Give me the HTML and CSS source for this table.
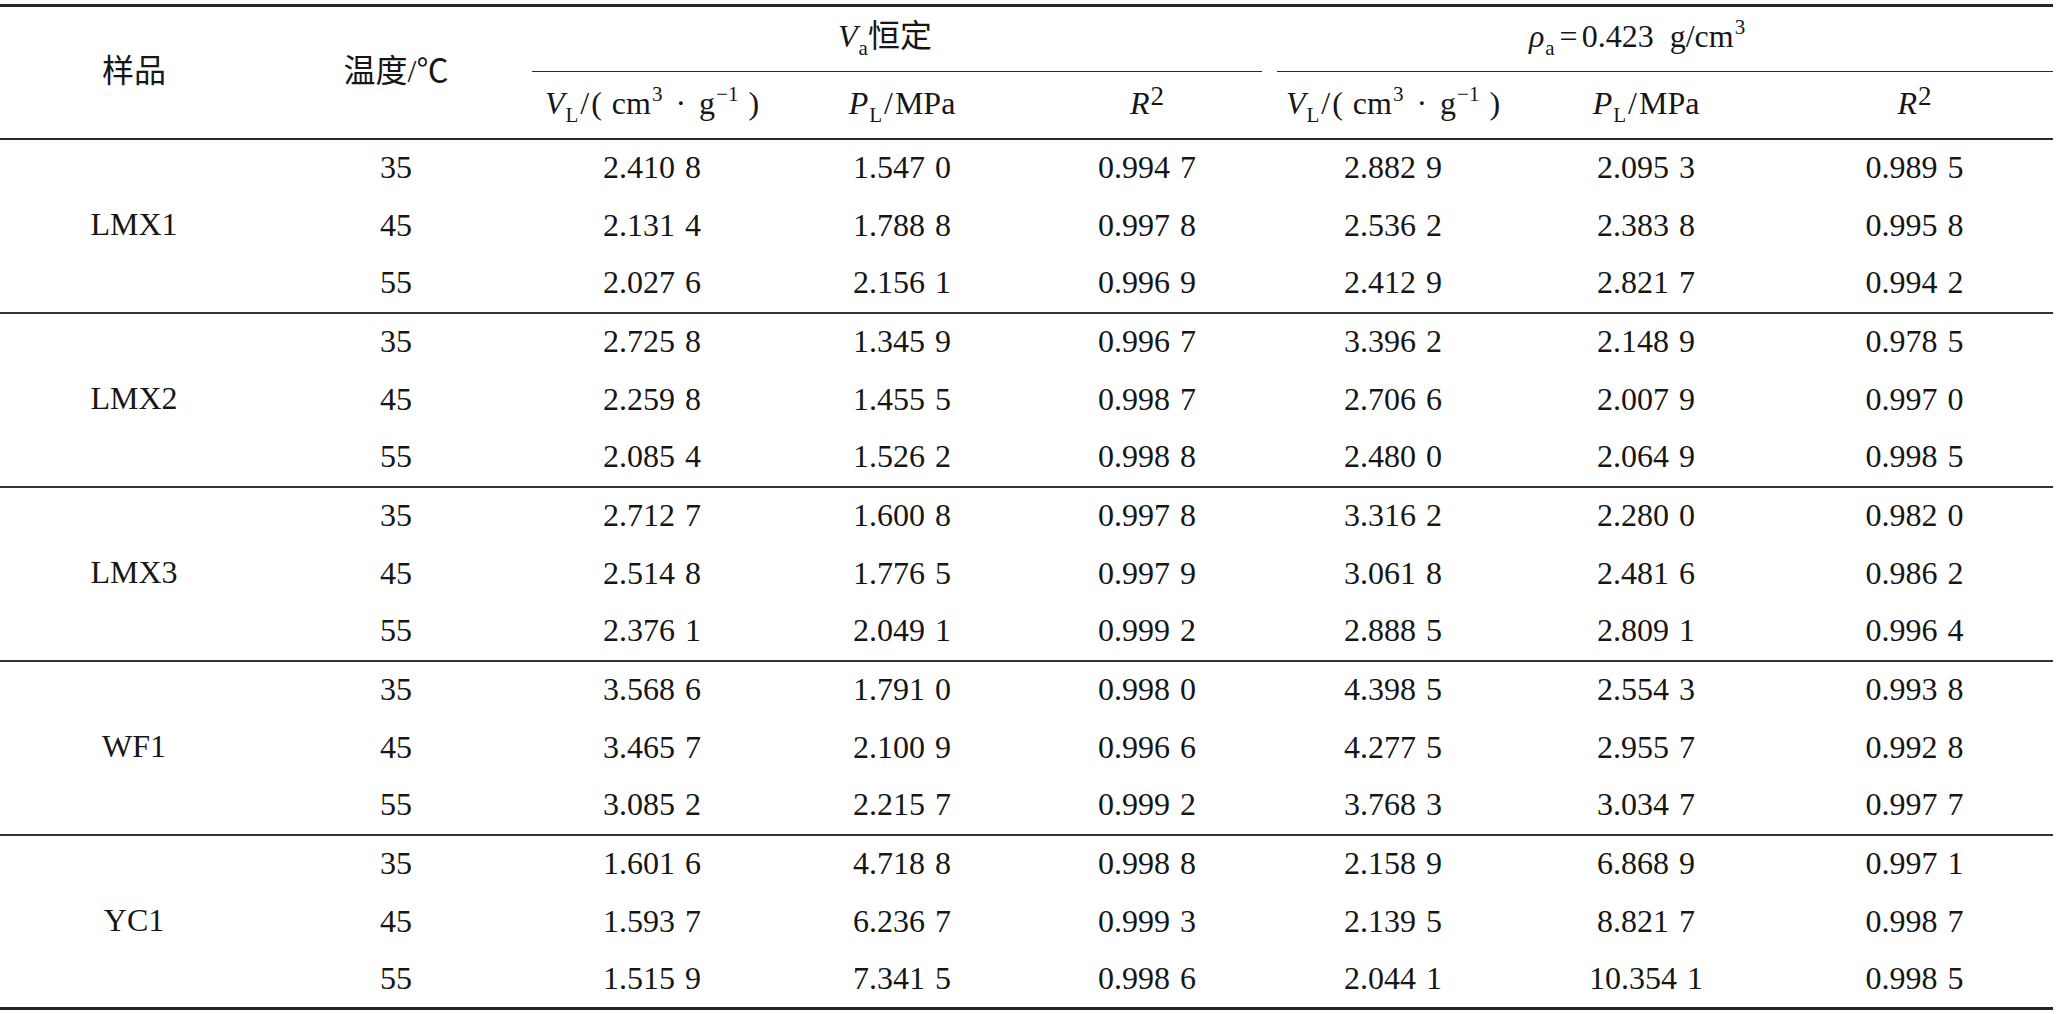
FILE: index.html
```html
<!DOCTYPE html>
<html lang="zh">
<head>
<meta charset="utf-8">
<title>表</title>
<link rel="stylesheet" href="styles.css">
</head>
<body>
<table class="tbl">
  <colgroup>
    <col class="c1"><col class="c2"><col class="c3"><col class="c4"><col class="c5"><col class="c6"><col class="c7"><col class="c8">
  </colgroup>
  <thead>
    <tr class="h1">
      <th rowspan="2" class="hb">样品</th>
      <th rowspan="2" class="hb">温度/℃</th>
      <th colspan="3" class="grp g1"><div class="gl"><span class="lat"><i>V</i><sub>a</sub></span>恒定</div></th>
      <th colspan="3" class="grp g2"><div class="gl"><span class="lat"><i>ρ</i><sub>a</sub><span class="eq">=</span>0.423&nbsp; g/cm<sup>3</sup></span></div></th>
    </tr>
    <tr class="h2">
      <th class="hb"><span class="lat"><i>V</i><sub>L</sub><span class="sl">/</span><span class="pl">(</span>cm<sup>3</sup><span class="dot">·</span>g<sup>−1</sup><span class="prr">)</span></span></th>
      <th class="hb"><span class="lat"><i>P</i><sub>L</sub><span class="sl">/</span>MPa</span></th>
      <th class="hb"><span class="lat"><i>R</i><sup class="r2">2</sup></span></th>
      <th class="hb"><span class="lat"><i>V</i><sub>L</sub><span class="sl">/</span><span class="pl">(</span>cm<sup>3</sup><span class="dot">·</span>g<sup>−1</sup><span class="prr">)</span></span></th>
      <th class="hb"><span class="lat"><i>P</i><sub>L</sub><span class="sl">/</span>MPa</span></th>
      <th class="hb"><span class="lat"><i>R</i><sup class="r2">2</sup></span></th>
    </tr>
  </thead>
  <tbody>
    <tr><td rowspan="3" class="end">LMX1</td><td>35</td><td>2.410 8</td><td>1.547 0</td><td>0.994 7</td><td>2.882 9</td><td>2.095 3</td><td>0.989 5</td></tr>
    <tr><td>45</td><td>2.131 4</td><td>1.788 8</td><td>0.997 8</td><td>2.536 2</td><td>2.383 8</td><td>0.995 8</td></tr>
    <tr class="last"><td>55</td><td>2.027 6</td><td>2.156 1</td><td>0.996 9</td><td>2.412 9</td><td>2.821 7</td><td>0.994 2</td></tr>

    <tr><td rowspan="3" class="end">LMX2</td><td>35</td><td>2.725 8</td><td>1.345 9</td><td>0.996 7</td><td>3.396 2</td><td>2.148 9</td><td>0.978 5</td></tr>
    <tr><td>45</td><td>2.259 8</td><td>1.455 5</td><td>0.998 7</td><td>2.706 6</td><td>2.007 9</td><td>0.997 0</td></tr>
    <tr class="last"><td>55</td><td>2.085 4</td><td>1.526 2</td><td>0.998 8</td><td>2.480 0</td><td>2.064 9</td><td>0.998 5</td></tr>

    <tr><td rowspan="3" class="end">LMX3</td><td>35</td><td>2.712 7</td><td>1.600 8</td><td>0.997 8</td><td>3.316 2</td><td>2.280 0</td><td>0.982 0</td></tr>
    <tr><td>45</td><td>2.514 8</td><td>1.776 5</td><td>0.997 9</td><td>3.061 8</td><td>2.481 6</td><td>0.986 2</td></tr>
    <tr class="last"><td>55</td><td>2.376 1</td><td>2.049 1</td><td>0.999 2</td><td>2.888 5</td><td>2.809 1</td><td>0.996 4</td></tr>

    <tr><td rowspan="3" class="end">WF1</td><td>35</td><td>3.568 6</td><td>1.791 0</td><td>0.998 0</td><td>4.398 5</td><td>2.554 3</td><td>0.993 8</td></tr>
    <tr><td>45</td><td>3.465 7</td><td>2.100 9</td><td>0.996 6</td><td>4.277 5</td><td>2.955 7</td><td>0.992 8</td></tr>
    <tr class="last"><td>55</td><td>3.085 2</td><td>2.215 7</td><td>0.999 2</td><td>3.768 3</td><td>3.034 7</td><td>0.997 7</td></tr>

    <tr><td rowspan="3" class="end final">YC1</td><td>35</td><td>1.601 6</td><td>4.718 8</td><td>0.998 8</td><td>2.158 9</td><td>6.868 9</td><td>0.997 1</td></tr>
    <tr><td>45</td><td>1.593 7</td><td>6.236 7</td><td>0.999 3</td><td>2.139 5</td><td>8.821 7</td><td>0.998 7</td></tr>
    <tr class="last final"><td>55</td><td>1.515 9</td><td>7.341 5</td><td>0.998 6</td><td>2.044 1</td><td>10.354 1</td><td>0.998 5</td></tr>
  </tbody>
</table>
</body>
</html>
```

FILE: styles.css
```css
html, body {
  margin: 0;
  padding: 0;
  background: #ffffff;
}

body {
  font-family: "Liberation Serif", "Noto Sans CJK SC", serif;
  color: #161616;
  font-size: 32px;
}

.tbl {
  margin-top: 4px;
  width: 2053px;
  table-layout: fixed;
  border-collapse: separate;
  border-spacing: 0;
}

.c1 { width: 268px; }
.c2 { width: 256px; }
.c3 { width: 256px; }
.c4 { width: 244px; }
.c5 { width: 246px; }
.c6 { width: 246px; }
.c7 { width: 260px; }
.c8 { width: 277px; }

.tbl th,
.tbl td {
  padding: 0 0 4px 0;
  text-align: center;
  vertical-align: middle;
  font-weight: normal;
  white-space: nowrap;
  line-height: 1;
}

.lat {
  font-family: "Liberation Serif", serif;
}

.tbl td {
  font-size: 32px;
  word-spacing: 2px;
}

.h1 { height: 68px; }
.h1 th { border-top: 3px solid #262626; }

.h2 { height: 68px; }

.hb { border-bottom: 2px solid #2a2a2a; }

.tbl .grp { vertical-align: bottom; }
.tbl .g1 { padding: 0 8px 0 8px; }
.tbl .g2 { padding: 0 0 0 7px; }

.gl {
  display: block;
  box-sizing: border-box;
  height: 65px;
  line-height: 58px;
  border-bottom: 1px solid #2a2a2a;
  text-align: center;
}
.g1 .gl { padding-right: 24px; }
.g2 .gl { padding-right: 56px; }

.eq { margin: 0 4px 0 5px; }
.sl { margin: 0 2px; }
.pl { margin-right: 10px; }
.prr { margin-left: 10px; }
.dot { margin: 0 13px; }

.tbl i { font-style: italic; }

.tbl sub {
  font-size: 21px;
  vertical-align: -8px;
  line-height: 0;
  margin-left: 1px;
}

.tbl sup {
  font-size: 21px;
  vertical-align: 13px;
  line-height: 0;
  margin-left: 1px;
}

.tbl sup.r2 {
  font-size: 27px;
  vertical-align: 9px;
}

.tbl tbody tr { height: 58px; }

.tbl tr.last td,
.tbl td.end { border-bottom: 2px solid #333333; }

.tbl tr.last.final td,
.tbl td.end.final { border-bottom: 3px solid #262626; }
```
